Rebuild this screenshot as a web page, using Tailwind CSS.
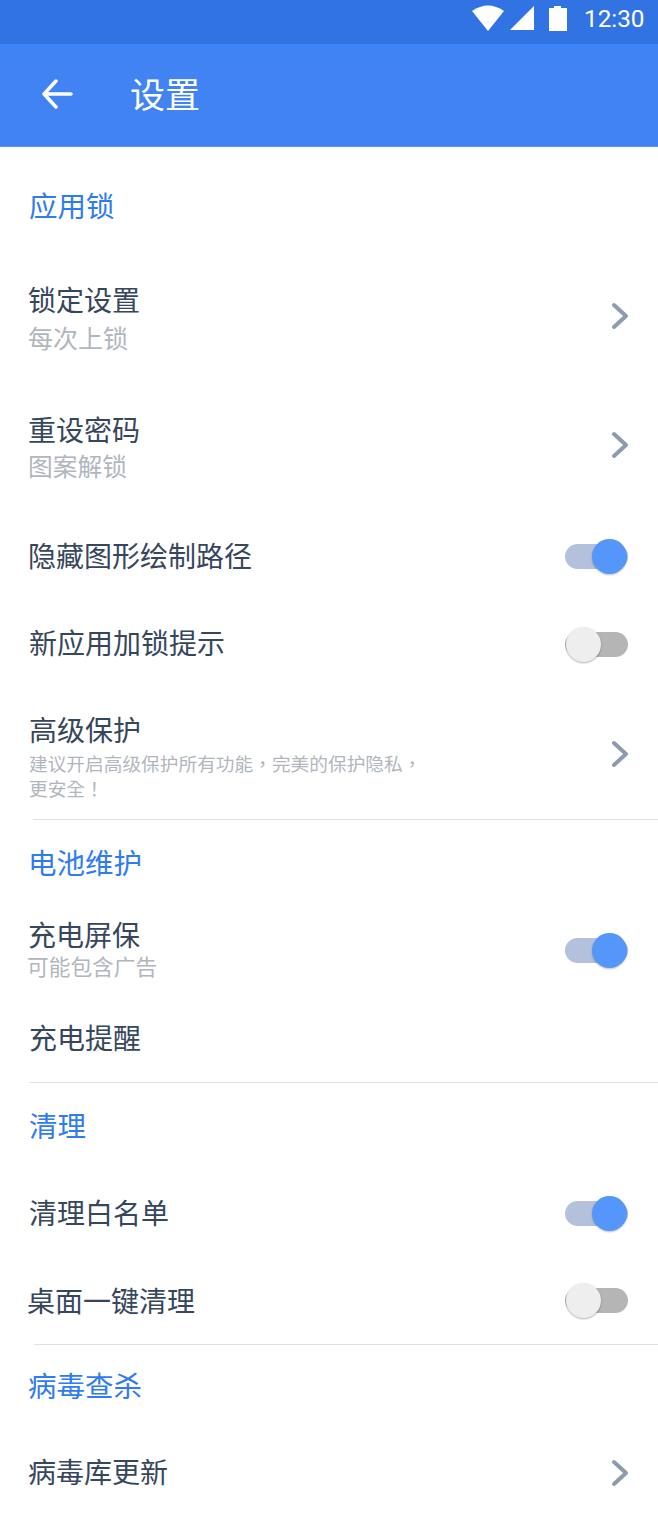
<!DOCTYPE html>
<html lang="zh-CN">
<head>
    <meta charset="UTF-8">
    <title>设置</title>
    <script src="https://cdn.jsdelivr.net/npm/@tailwindcss/browser@4"></script>
</head>
<body class="w-[658px] h-[1521px] overflow-hidden bg-white font-['Noto_Sans_CJK_SC','Noto_Sans',sans-serif]">
    <!-- status bar -->
    <div class="h-[44px] bg-[#3173e2] flex items-center justify-end pr-[14px] text-white">
        <svg class="w-[32px] h-[26px] mt-[-8px]" viewBox="0 0 32 26" fill="currentColor"><path d="M0 6 Q16 -5 32 6 L16 26 Z"/></svg>
        <svg class="w-[24px] h-[24px] ml-[6px] mt-[-8px]" viewBox="0 0 24 24" fill="currentColor"><path d="M24 0 V24 H0 Z"/></svg>
        <svg class="w-[18px] h-[25px] ml-[15px] mt-[-8px]" viewBox="0 0 18 25" fill="currentColor"><path d="M5 2 V0 H12 V2 H18 V25 H0 V2 Z"/></svg>
        <span class="ml-[17px] mt-[-6px] w-[60px] text-[24.3px] leading-[30px] font-['Roboto'] font-normal">12:30</span>
    </div>
    <!-- app bar -->
    <header class="h-[103px] bg-[#4183f2] border-t-[5px] border-[#3d84fb] border-b border-b-[#5b97f8] flex items-center text-white">
        <svg class="w-[32px] h-[30px] ml-[41px] mt-[-7px]" viewBox="0 0 32 30" fill="none" stroke="currentColor" stroke-width="3.5" stroke-linecap="round" stroke-linejoin="round"><path d="M30 15 H3 M15 2 L3 15 L15 28"/></svg>
        <h1 class="ml-[57px] mt-[-10px] text-[35px] leading-[44px]">设置</h1>
    </header>

    <main class="text-[#36465d]">
        <div class="h-[118px] flex items-center pl-[29px] pb-[2px] text-[28.5px] text-[#2f7bf0]">应用锁</div>

        <div class="h-[102px] flex items-center justify-between pl-[28px] pr-[29px]">
            <div class="mt-[4px]">
                <p class="text-[28px] leading-[38px]">锁定设置</p>
                <p class="text-[25px] leading-[38px] text-[#b1b6be]">每次上锁</p>
            </div>
            <svg class="w-[18px] h-[28px]" viewBox="0 0 18 28" fill="none" stroke="#8e9aad" stroke-width="4" stroke-linecap="round" stroke-linejoin="round"><path d="M3 3 L15 14 L3 25"/></svg>
        </div>

        <div class="h-[156px] flex items-center justify-between pl-[28px] pr-[29px]">
            <div class="mt-[4px]">
                <p class="text-[28px] leading-[36px]">重设密码</p>
                <p class="text-[24.75px] leading-[36px] text-[#b1b6be]">图案解锁</p>
            </div>
            <svg class="w-[18px] h-[28px]" viewBox="0 0 18 28" fill="none" stroke="#8e9aad" stroke-width="4" stroke-linecap="round" stroke-linejoin="round"><path d="M3 3 L15 14 L3 25"/></svg>
        </div>

        <div class="h-[66px] flex items-center justify-between pl-[28px] pr-[30px]">
            <p class="text-[28px] leading-[38px] mt-[-2px]">隐藏图形绘制路径</p>
            <div class="relative w-[63px] h-[25px] rounded-full bg-[#b3c1dc]">
                <span class="absolute right-[1px] top-[-5px] w-[35px] h-[35px] rounded-full bg-[#5596fb] shadow-[0_1px_2px_rgba(0,0,0,0.25)]"></span>
            </div>
        </div>

        <div class="h-[110px] flex items-center justify-between pl-[29px] pr-[30px]">
            <p class="text-[28px] leading-[38px] mt-[-4px]">新应用加锁提示</p>
            <div class="relative w-[63px] h-[25px] rounded-full bg-[#b5b5b5]">
                <span class="absolute left-[1px] top-[-5px] w-[35px] h-[35px] rounded-full bg-[#eeeeee] shadow-[0_1px_2px_rgba(0,0,0,0.3)]"></span>
            </div>
        </div>

        <div class="h-[110px] flex items-center justify-between pl-[29px] pr-[29px]">
            <div class="mt-[2px]">
                <p class="text-[28px] leading-[38px]">高级保护</p>
                <p lang="zh-TW" class="mt-[2px] w-[400px] text-[18.7px] leading-[25px] text-[#b1b6be] font-['Noto_Sans_CJK_TC',sans-serif]">建议开启高级保护所有功能，完美的保护隐私，更安全！</p>
            </div>
            <svg class="w-[18px] h-[28px]" viewBox="0 0 18 28" fill="none" stroke="#8e9aad" stroke-width="4" stroke-linecap="round" stroke-linejoin="round"><path d="M3 3 L15 14 L3 25"/></svg>
        </div>

        <div class="mt-[10px] ml-[33px] h-px bg-[#dfe1e5]"></div>

        <div class="h-[84px] flex items-center pl-[28px] text-[28.5px] text-[#2f7bf0]">电池维护</div>

        <div class="h-[92px] flex items-center justify-between pl-[28px] pr-[30px]">
            <div>
                <p class="text-[28px] leading-[32px]">充电屏保</p>
                <p class="ml-[-1px] text-[21.7px] leading-[32px] text-[#b1b6be]">可能包含广告</p>
            </div>
            <div class="relative w-[63px] h-[25px] rounded-full bg-[#b3c1dc]">
                <span class="absolute right-[1px] top-[-5px] w-[35px] h-[35px] rounded-full bg-[#5596fb] shadow-[0_1px_2px_rgba(0,0,0,0.25)]"></span>
            </div>
        </div>

        <div class="h-[86px] flex items-center pl-[29px] pb-[4px] text-[28px]">充电提醒</div>

        <div class="ml-[29px] h-px bg-[#dfe1e5]"></div>

        <div class="h-[86px] flex items-center pl-[29px] pb-[2px] text-[28.5px] text-[#2f7bf0]">清理</div>

        <div class="h-[88px] flex items-center justify-between pl-[29px] pr-[30px]">
            <p class="text-[28px] leading-[38px] mt-[-2px]">清理白名单</p>
            <div class="relative w-[63px] h-[25px] rounded-full bg-[#b3c1dc]">
                <span class="absolute right-[1px] top-[-5px] w-[35px] h-[35px] rounded-full bg-[#5596fb] shadow-[0_1px_2px_rgba(0,0,0,0.25)]"></span>
            </div>
        </div>

        <div class="h-[87px] flex items-center justify-between pl-[27px] pr-[30px]">
            <p class="text-[28px] leading-[38px] mt-[-2px]">桌面一键清理</p>
            <div class="relative w-[63px] h-[25px] rounded-full bg-[#b5b5b5]">
                <span class="absolute left-[1px] top-[-5px] w-[35px] h-[35px] rounded-full bg-[#eeeeee] shadow-[0_1px_2px_rgba(0,0,0,0.3)]"></span>
            </div>
        </div>

        <div class="ml-[34px] h-px bg-[#dfe1e5]"></div>

        <div class="h-[80px] flex items-center pl-[28px] text-[28.5px] text-[#2f7bf0]">病毒查杀</div>

        <div class="h-[96px] flex items-center justify-between pl-[28px] pr-[29px]">
            <p class="text-[28px] leading-[38px] mt-[-4px]">病毒库更新</p>
            <svg class="w-[18px] h-[28px]" viewBox="0 0 18 28" fill="none" stroke="#8e9aad" stroke-width="4" stroke-linecap="round" stroke-linejoin="round"><path d="M3 3 L15 14 L3 25"/></svg>
        </div>
    </main>
</body>
</html>
